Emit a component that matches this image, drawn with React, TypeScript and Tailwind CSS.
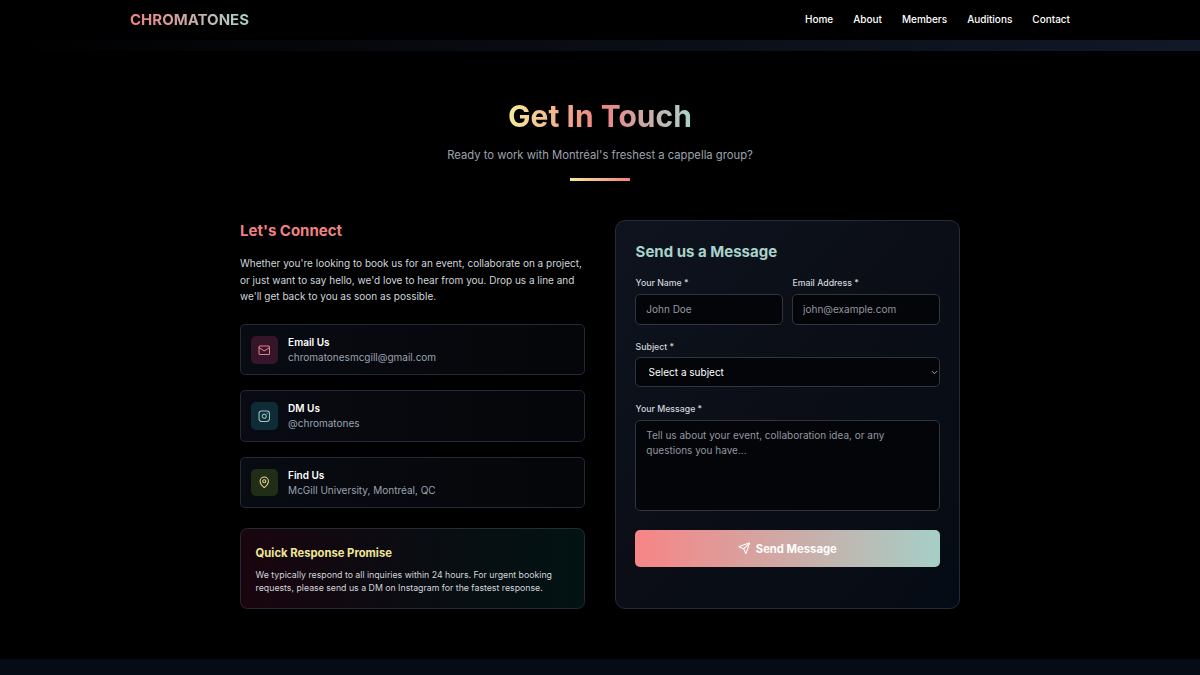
import React, { useState } from 'react';
import { Mail, Instagram, MapPin, Send, ChevronDown } from 'lucide-react';

const navLinks = ['Home', 'About', 'Members', 'Auditions', 'Contact'];

const contacts = [
  {
    title: 'Email Us',
    value: 'chromatonesmcgill@gmail.com',
    icon: Mail,
    box: 'bg-[#34152a] text-[#e58084]'
  },
  {
    title: 'DM Us',
    value: '@chromatones',
    icon: Instagram,
    box: 'bg-[#0f2c36] text-[#9cc6c2]'
  },
  {
    title: 'Find Us',
    value: 'McGill University, Montréal, QC',
    icon: MapPin,
    box: 'bg-[#202e17] text-[#e6dc94]'
  }
];

const fieldClass =
  'block w-full rounded-[5px] border border-[#30363f] bg-[#040508] px-[10.3px] text-[10px] leading-[15px] text-white placeholder:text-[#9297a0] focus:outline-none focus:border-[#f38181]';

const labelClass = 'block mb-[4.3px] pl-[0.6px] text-[8.75px] leading-[12.5px] font-medium text-[#d1d5db]';

const Header: React.FC = () => (
  <header className="h-10 bg-black">
    <div className="mx-auto flex h-full w-[940px] items-center justify-between">
      <a href="#" className="bg-linear-to-r/srgb from-[#ee8282] to-[#a8d3cb] bg-clip-text text-[15px] leading-5 font-bold text-transparent">
        CHROMATONES
      </a>
      <nav className="flex gap-5 pb-px">
        {navLinks.map(link => (
          <a key={link} href="#" className="text-[10px] leading-[15px] font-medium text-white">
            {link}
          </a>
        ))}
      </nav>
    </div>
  </header>
);

const ContactInfo: React.FC = () => (
  <div>
    <h3 className="mb-[14.8px] text-[15px] leading-5 font-bold text-[#ee8282]">Let's Connect</h3>
    <p className="mb-5 text-[10px] leading-[16.25px] text-[#d1d5db]">
      Whether you're looking to book us for an event, collaborate on a project, or just want to say hello, we'd love to
      hear from you. Drop us a line and we'll get back to you as soon as possible.
    </p>

    <div className="mb-5 space-y-[15px]">
      {contacts.map(({ title, value, icon: Icon, box }) => (
        <div
          key={title}
          className="flex h-[51.25px] items-center gap-2.5 rounded-[5px] border border-[#232a35] bg-linear-to-r/srgb from-[#080b12] to-[#050609] px-[9.6px]"
        >
          <div className={`flex size-[27.5px] items-center justify-center rounded-[5px] ${box}`}>
            <Icon className="size-[12.5px]" />
          </div>
          <div className="pt-[0.6px] text-[10px] leading-[15px]">
            <h4 className="font-semibold text-white">{title}</h4>
            <p className="text-[#9ca3af]">{value}</p>
          </div>
        </div>
      ))}
    </div>

    <div className="h-[81.5px] rounded-[7.5px] border border-[#262c36] bg-linear-to-r/srgb from-[#19050e] via-[#0a0c12] to-[#021313] px-[14.6px] pt-[15.9px]">
      <h4 className="mb-[6.9px] text-[11.25px] leading-[17.5px] font-bold text-[#f0e797]">Quick Response Promise</h4>
      <p className="text-[8.75px] leading-[12.5px] text-[#d1d5db]">
        We typically respond to all inquiries within 24 hours. For urgent booking requests, please send us a DM on
        Instagram for the fastest response.
      </p>
    </div>
  </div>
);

const ContactForm: React.FC = () => {
  const [subject, setSubject] = useState('');

  return (
    <div className="-mt-[0.4px] rounded-[10px] border border-[#262c36] bg-linear-to-br/srgb from-[#0e131d] via-[#0b0e17] to-[#050b14] px-[19px] pt-[20.5px] pb-[19.6px]">
      <h3 className="mb-[15px] pl-[0.6px] text-[15px] leading-5 font-bold text-[#a8d3cb]">Send us a Message</h3>
      <form className="space-y-[15.8px]" onSubmit={e => e.preventDefault()}>
        <div className="grid grid-cols-2 gap-[9.4px]">
          <div>
            <label htmlFor="name" className={labelClass}>Your Name *</label>
            <input id="name" type="text" placeholder="John Doe" className={`${fieldClass} h-[31.25px]`} />
          </div>
          <div className="-ml-[0.4px]">
            <label htmlFor="email" className={labelClass}>Email Address *</label>
            <input id="email" type="email" placeholder="john@example.com" className={`${fieldClass} h-[31.25px]`} />
          </div>
        </div>

        <div>
          <label htmlFor="subject" className={labelClass}>Subject *</label>
          <div className="relative">
            <select
              id="subject"
              value={subject}
              onChange={e => setSubject(e.target.value)}
              className={`${fieldClass} h-[29.75px] appearance-none pl-[12.6px]`}
            >
              <option value="">Select a subject</option>
              <option value="booking">Event Booking</option>
              <option value="collaboration">Collaboration</option>
              <option value="other">Other</option>
            </select>
            <ChevronDown className="pointer-events-none absolute top-[10.5px] right-[1px] size-[9px] text-gray-300" />
          </div>
        </div>

        <div>
          <label htmlFor="message" className={labelClass}>Your Message *</label>
          <textarea
            id="message"
            placeholder="Tell us about your event, collaboration idea, or any questions you have..."
            className={`${fieldClass} h-[91.25px] resize-none py-[7.5px]`}
          />
        </div>

        <button
          type="submit"
          className="mt-[19px] flex h-[37.5px] w-full items-center justify-center gap-[5px] rounded-[5px] bg-linear-to-r/srgb from-[#f78585] to-[#a5cfc6] text-[11.25px] leading-[17.5px] font-bold text-white"
        >
          <Send className="size-[12.5px]" />
          <span className="pt-[1.6px]">Send Message</span>
        </button>
      </form>
    </div>
  );
};

export default function App() {
  return (
    <div className="h-[675px] overflow-hidden bg-black font-['Inter',sans-serif]">
      <Header />
      <div className="h-[10.6px] bg-linear-to-r/srgb from-black via-[#090d14] to-[#111827]" />
      <section className="h-[608.4px] bg-black pt-[50px]">
        <div className="mx-auto w-[720px]">
          <div className="mb-10 flex flex-col items-center text-center">
            <h2 className="mb-4 bg-linear-to-r/srgb from-[#f5ec9a] via-[#ee8282] to-[#a8d3cb] bg-clip-text text-[30px] leading-[30px] font-bold text-transparent">
              Get In Touch
            </h2>
            <p className="mb-[14px] text-[11.25px] leading-[17.5px] text-[#9ca3af]">
              Ready to work with Montréal's freshest a cappella group?
            </p>
            <div className="h-[2.5px] w-[60px] bg-linear-to-r/srgb from-[#f5ec9a] to-[#f38181]" />
          </div>

          <div className="grid grid-cols-2 gap-[30px]">
            <ContactInfo />
            <ContactForm />
          </div>
        </div>
      </section>
      <footer className="h-4 bg-[#060c15]" />
    </div>
  );
}
